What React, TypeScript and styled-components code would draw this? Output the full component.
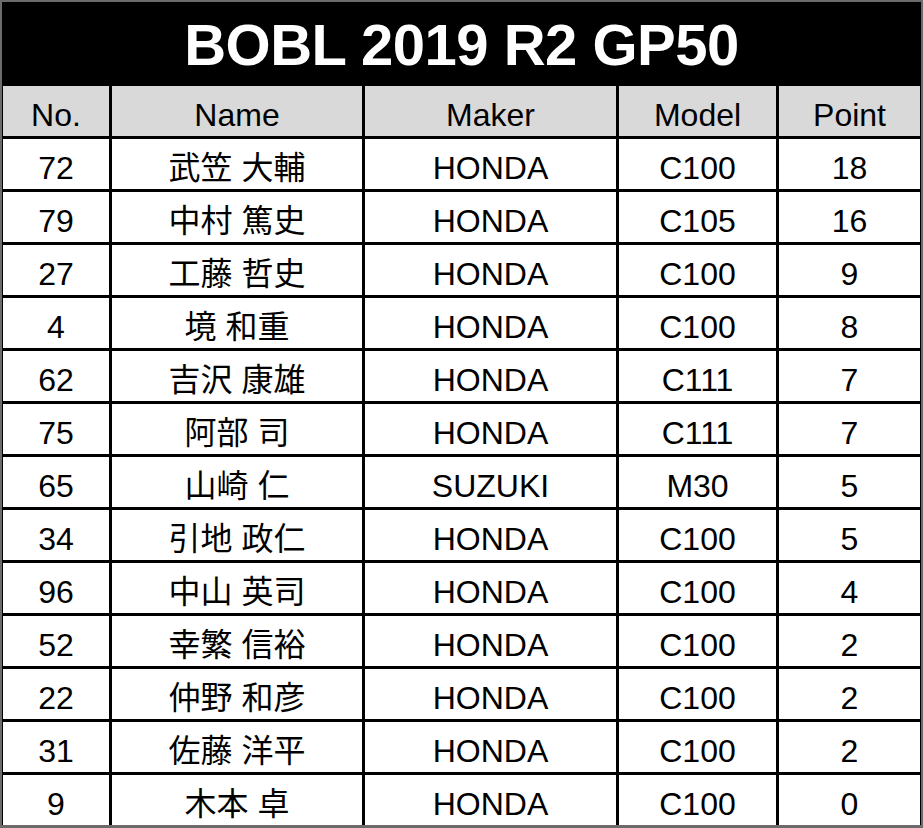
import * as React from 'react';
import styled, {createGlobalStyle} from 'styled-components';

const GlobalStyle = createGlobalStyle`
    *{
        box-sizing: border-box;
    }
    body{
        margin: 0;
        padding: 0;
        background-color: #6b6b6b;
        font-family: 'Liberation Sans', 'Noto Sans CJK JP', Arial, sans-serif;
    }
`;

const Frame = styled.div`
    width: 923px;
    height: 828px;
    padding: 2px 2px 3px 2px;
    background-color: #6b6b6b;
`;

const Sheet = styled.div`
    width: 919px;
    background-color: #000;
`;

const Title = styled.h1`
    margin: 0;
    height: 84px;
    display: flex;
    align-items: center;
    justify-content: center;
    color: #fff;
    font-size: 58px;
    font-weight: bold;
    letter-spacing: -0.5px;
    line-height: 1;
    padding-top: 2px;
`;

const Grid = styled.div`
    display: grid;
    grid-template-columns: 106px 250px 251px 157px 141px;
    grid-auto-rows: 50px;
    column-gap: 3px;
    row-gap: 3px;
    padding: 0 1px;
`;

const Cell = styled.div<{$head?: boolean}>`
    display: flex;
    align-items: center;
    justify-content: center;
    background-color: ${p => p.$head ? '#d9d9d9' : '#fff'};
    color: #000;
    font-size: 32px;
    line-height: 1;
    padding-top: 7px;
    white-space: nowrap;
`;

type Rider = {
    no: string;
    name: string;
    maker: string;
    model: string;
    point: string;
};

const heads = ['No.', 'Name', 'Maker', 'Model', 'Point'];

const riders: Rider[] = [
    {no: '72', name: '武笠 大輔', maker: 'HONDA', model: 'C100', point: '18'},
    {no: '79', name: '中村 篤史', maker: 'HONDA', model: 'C105', point: '16'},
    {no: '27', name: '工藤 哲史', maker: 'HONDA', model: 'C100', point: '9'},
    {no: '4', name: '境 和重', maker: 'HONDA', model: 'C100', point: '8'},
    {no: '62', name: '吉沢 康雄', maker: 'HONDA', model: 'C111', point: '7'},
    {no: '75', name: '阿部 司', maker: 'HONDA', model: 'C111', point: '7'},
    {no: '65', name: '山崎 仁', maker: 'SUZUKI', model: 'M30', point: '5'},
    {no: '34', name: '引地 政仁', maker: 'HONDA', model: 'C100', point: '5'},
    {no: '96', name: '中山 英司', maker: 'HONDA', model: 'C100', point: '4'},
    {no: '52', name: '幸繁 信裕', maker: 'HONDA', model: 'C100', point: '2'},
    {no: '22', name: '仲野 和彦', maker: 'HONDA', model: 'C100', point: '2'},
    {no: '31', name: '佐藤 洋平', maker: 'HONDA', model: 'C100', point: '2'},
    {no: '9', name: '木本 卓', maker: 'HONDA', model: 'C100', point: '0'},
];

const App = () => {
    return (
        <>
            <GlobalStyle/>
            <Frame>
                <Sheet>
                    <Title>BOBL 2019 R2 GP50</Title>
                    <Grid>
                        {heads.map(h => <Cell $head key={h}>{h}</Cell>)}
                        {riders.map(r => (
                            <React.Fragment key={r.no}>
                                <Cell>{r.no}</Cell>
                                <Cell>{r.name}</Cell>
                                <Cell>{r.maker}</Cell>
                                <Cell>{r.model}</Cell>
                                <Cell>{r.point}</Cell>
                            </React.Fragment>
                        ))}
                    </Grid>
                </Sheet>
            </Frame>
        </>
    );
};

export default App;
